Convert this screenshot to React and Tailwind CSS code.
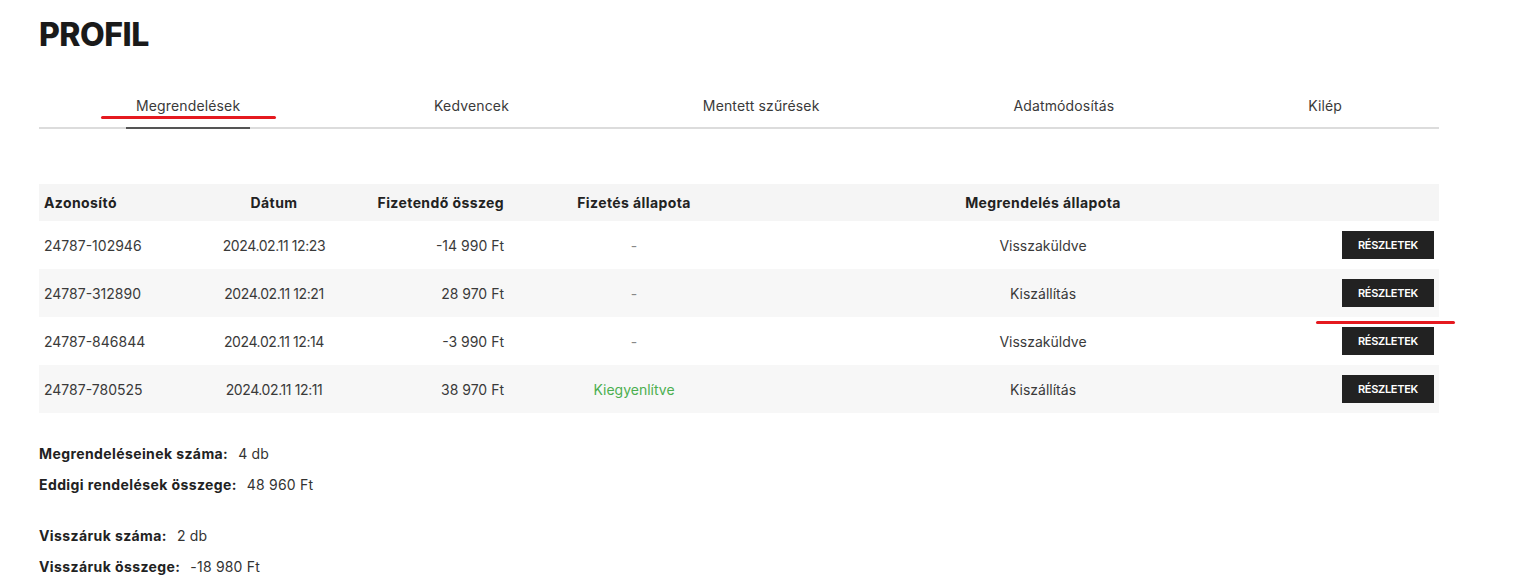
import React from 'react'

const tabs = ['Megrendelések', 'Kedvencek', 'Mentett szűrések', 'Adatmódosítás', 'Kilép']

const orders = [
  { id: '24787-102946', date: '2024.02.11 12:23', total: '-14 990 Ft', pay: '-', status: 'Visszaküldve' },
  { id: '24787-312890', date: '2024.02.11 12:21', total: '28 970 Ft', pay: '-', status: 'Kiszállítás' },
  { id: '24787-846844', date: '2024.02.11 12:14', total: '-3 990 Ft', pay: '-', status: 'Visszaküldve' },
  { id: '24787-780525', date: '2024.02.11 12:11', total: '38 970 Ft', pay: 'Kiegyenlítve', status: 'Kiszállítás' },
]

const cols = 'grid grid-cols-[161px_148px_161px_250px_1fr_112px] items-center'

function Summary({ label, value }) {
  return (
    <div className="flex items-center gap-[10px] h-[31px] text-[14px]">
      <span className="font-bold text-[#222] tracking-[0.4px]">{label}</span>
      <span className="text-[#333] tracking-[0.2px]">{value}</span>
    </div>
  )
}

export default function App() {
  return (
    <div
      className="relative min-h-[585px] bg-white text-[#222] px-[39px] pt-[15px]"
      style={{ fontFamily: 'Inter, "Noto Sans", sans-serif' }}
    >
      <h1 className="text-[32px] leading-[40px] font-extrabold tracking-[-0.5px] text-[#1a1a1a]">PROFIL</h1>

      {/* tabs */}
      <div className="w-[1400px] mt-[41px] flex justify-around border-b-2 border-[#dcdcdc]">
        {tabs.map((t, i) => (
          <div
            key={t}
            className={
              'px-[10px] pb-[11px] text-[14px] leading-[20px] text-[#3a3a3a] tracking-[0.15px] -mb-[2px] border-b-2 ' +
              (i === 0 ? 'border-[#555]' : 'border-transparent')
            }
          >
            {t}
          </div>
        ))}
      </div>

      {/* table */}
      <div className="w-[1400px] mt-[55px] text-[14px]">
        <div className={cols + ' h-[37px] bg-[#f5f5f5] font-bold text-[#222] tracking-[0.4px]'}>
          <div className="pl-[5px]">Azonosító</div>
          <div className="text-center">Dátum</div>
          <div className="text-right pr-[5px]">Fizetendő összeg</div>
          <div className="text-center">Fizetés állapota</div>
          <div className="text-center">Megrendelés állapota</div>
          <div></div>
        </div>
        {orders.map((o, i) => (
          <div key={o.id} className={cols + ' h-[48px] text-[#3a3a3a] ' + (i % 2 === 1 ? 'bg-[#f7f7f7]' : 'bg-white')}>
            <div className="pl-[5px]">{o.id}</div>
            <div className="text-center tracking-[-0.4px]">{o.date}</div>
            <div className="text-right pr-[5px]">{o.total}</div>
            <div className={'text-center ' + (o.pay === '-' ? 'text-[#888]' : 'text-[#4caf50]')}>{o.pay}</div>
            <div className="text-center">{o.status}</div>
            <div className="flex justify-end pr-[5px]">
              <button className="w-[92px] h-[28px] bg-[#222] text-white text-[11px] font-semibold tracking-[-0.3px]">
                RÉSZLETEK
              </button>
            </div>
          </div>
        ))}
      </div>

      {/* summary */}
      <div className="mt-[25px]">
        <Summary label="Megrendeléseinek száma:" value="4 db" />
        <Summary label="Eddigi rendelések összege:" value="48 960 Ft" />
        <div className="h-[20px]"></div>
        <Summary label="Visszáruk száma:" value="2 db" />
        <Summary label="Visszáruk összege:" value="-18 980 Ft" />
      </div>

      {/* annotation marks */}
      <div className="absolute left-[101px] top-[116px] w-[175px] h-[3px] rounded-full bg-[#e5191f]"></div>
      <div className="absolute left-[1316px] top-[321px] w-[139px] h-[3px] rounded-full bg-[#e5191f]"></div>
    </div>
  )
}
